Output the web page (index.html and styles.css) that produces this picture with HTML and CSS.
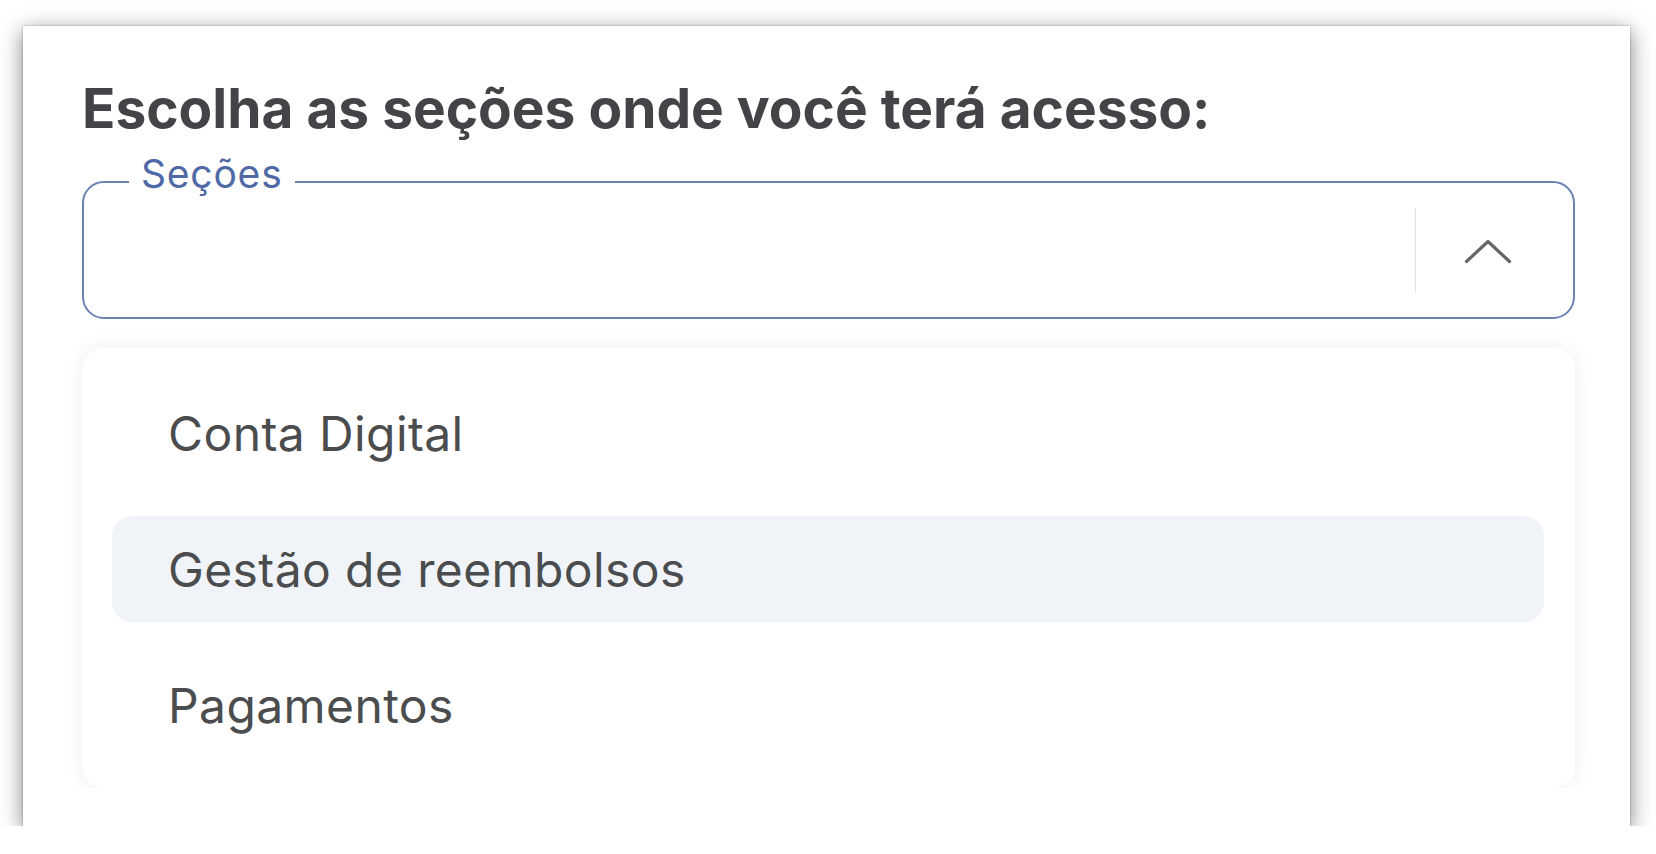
FILE: index.html
```html
<!DOCTYPE html>
<html lang="pt-BR">
<head>
    <meta charset="UTF-8">
    <meta name="viewport" content="width=device-width, initial-scale=1.0">
    <title>Seções</title>
    <link rel="stylesheet" href="styles.css">
</head>
<body>
    <div class="card">
        <h2 class="title">Escolha as seções onde você terá acesso:</h2>

        <div class="select">
            <span class="select-label">Seções</span>
            <div class="select-actions">
                <span class="select-divider"></span>
                <svg class="chevron" width="48" height="28" viewBox="0 0 48 28">
                    <polyline points="2.5,25.5 24,5.5 45.5,25.5" fill="none" stroke="#666666" stroke-width="3.2" stroke-linecap="round" stroke-linejoin="round"/>
                </svg>
            </div>
        </div>

        <div class="menu-clip">
            <ul class="menu">
                <li class="menu-item">Conta Digital</li>
                <li class="menu-item active">Gestão de reembolsos</li>
                <li class="menu-item">Pagamentos</li>
            </ul>
        </div>
    </div>
</body>
</html>
```

FILE: styles.css
```css
body {
    margin: 0;
    padding: 0;
    background: #ffffff;
    font-family: Inter, 'Noto Sans', sans-serif;
}

.card {
    box-sizing: border-box;
    width: 1607px;
    margin: 26px 0 0 23px;
    padding: 49px 55px 38px 59px;
    background: #ffffff;
    box-shadow: 0 5px 20px rgba(0, 0, 0, 0.5), 0 0 2px rgba(0, 0, 0, 0.3);
}

.title {
    margin: 0 0 40px 0;
    font-size: 55px;
    line-height: 66px;
    font-weight: 700;
    color: #424447;
}

.select {
    position: relative;
    box-sizing: border-box;
    height: 138px;
    border: 2px solid #6c81b3;
    border-radius: 22px;
    display: flex;
    align-items: center;
    justify-content: flex-end;
}

.select-label {
    position: absolute;
    top: -29px;
    left: 45px;
    padding: 0 12px;
    background: #ffffff;
    font-size: 39px;
    line-height: 40px;
    letter-spacing: 0.8px;
    color: #4f69a6;
}

.select-actions {
    display: flex;
    align-items: center;
    gap: 48px;
    padding-right: 61px;
}

.select-divider {
    width: 1px;
    height: 85px;
    background: #e2e2e2;
}

.chevron {
    display: block;
}

.menu-clip {
    overflow: hidden;
    margin: 13px -60px 0 -60px;
    padding: 16px 60px 0 60px;
}

.menu {
    list-style: none;
    margin: 0;
    padding: 32px 31px 30px 30px;
    background: #ffffff;
    border-radius: 22px;
    box-shadow: 0 0 20px rgba(0, 0, 0, 0.07);
    display: flex;
    flex-direction: column;
    gap: 30px;
}

.menu-item {
    box-sizing: border-box;
    height: 106px;
    padding: 0 0 0 56px;
    display: flex;
    align-items: center;
    border-radius: 20px;
    font-size: 48px;
    letter-spacing: 0.4px;
    color: #4b4c4e;
}

.menu-item.active {
    background: #f0f4f8;
}
```
